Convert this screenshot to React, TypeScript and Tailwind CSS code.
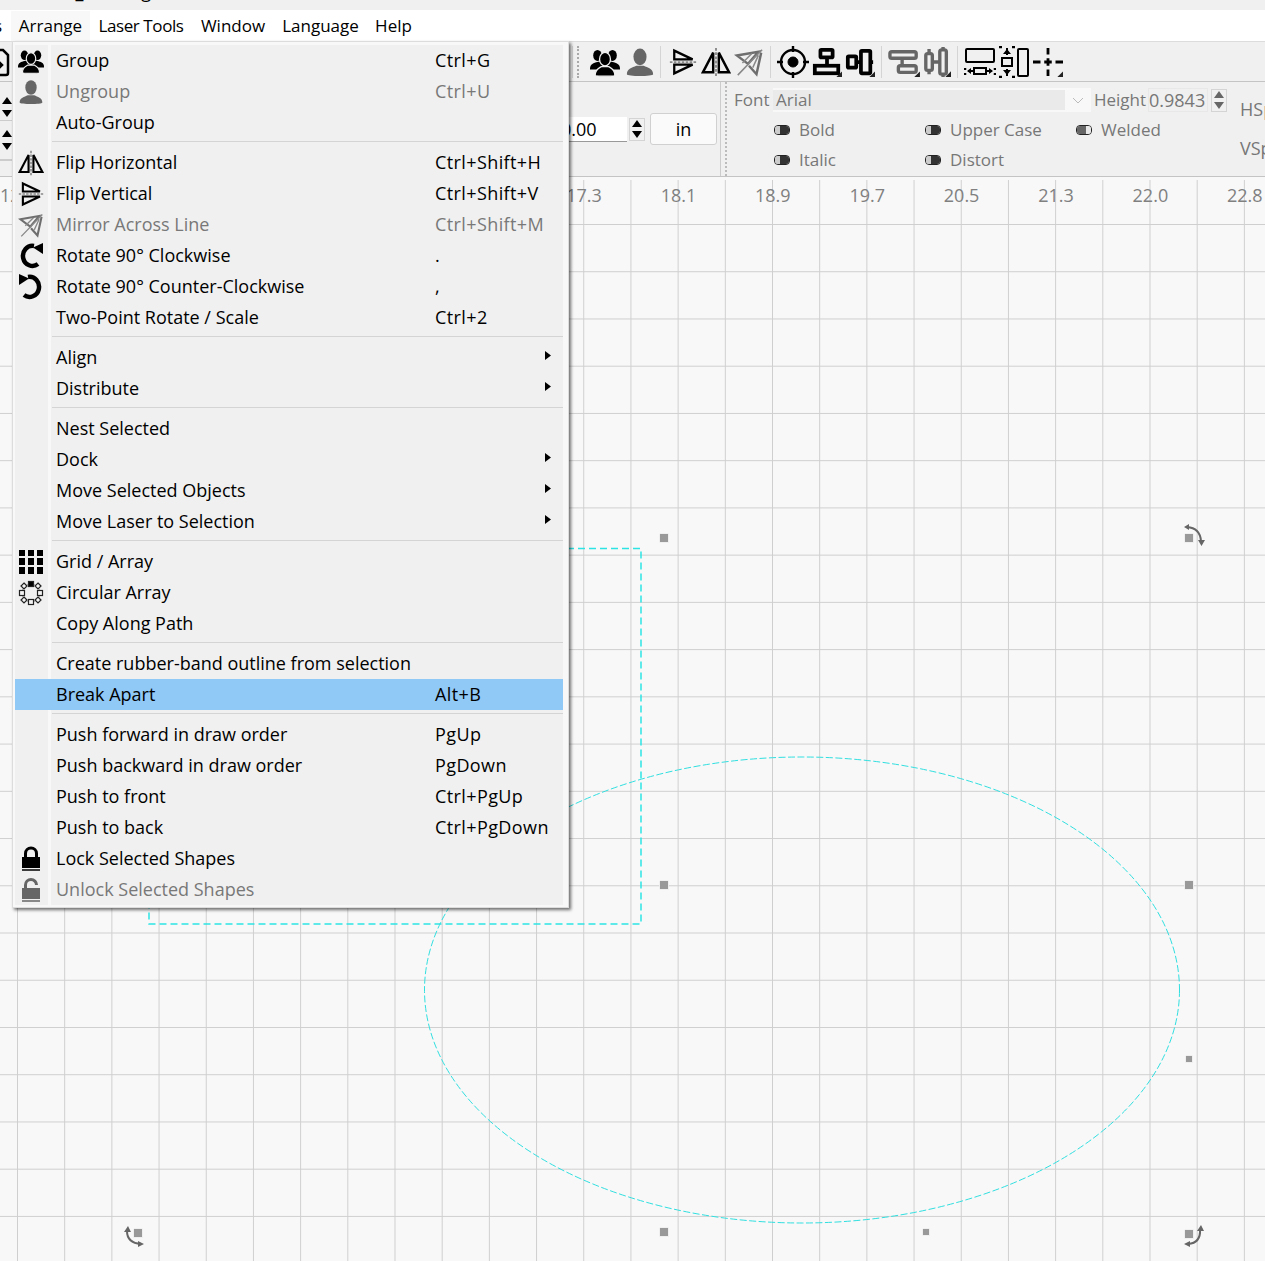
import type { ReactNode } from 'react'

const BLACK = '#000'
const GRAY = '#666'

function Users({ c = BLACK, size = 26 }: { c?: string; size?: number }) {
  return (
    <svg width={size} height={size} viewBox="0 0 32 32">
      <g fill={c}>
        <ellipse cx="8" cy="9" rx="4.6" ry="5.8" />
        <path d="M0 23c0-5 4-6 8-7s7 2 7 7v1H0z" />
        <ellipse cx="24" cy="9" rx="4.6" ry="5.8" />
        <path d="M32 23c0-5-4-6-8-7s-7 2-7 7v1h15z" />
      </g>
      <g fill={c} stroke="#f0f0f0" strokeWidth="1.4">
        <ellipse cx="16" cy="13" rx="5.8" ry="7.2" />
        <path d="M5.5 30c0-6 4-7.5 6.5-9h8c2.5 1.5 6.5 3 6.5 9 0 1.5-21 1.5-21 0z" />
      </g>
    </svg>
  )
}

function Person({ c = GRAY, size = 26 }: { c?: string; size?: number }) {
  return (
    <svg width={size} height={size} viewBox="0 0 32 32">
      <g fill={c}>
        <ellipse cx="16" cy="10.5" rx="7" ry="9" />
        <path d="M2 29c0-6 6-7 10-9h8c4 2 10 3 10 9 0 2.5-28 2.5-28 0z" />
      </g>
    </svg>
  )
}

function FlipH({ size = 26 }: { size?: number }) {
  return (
    <svg width={size} height={size} viewBox="0 0 32 32" fill="none">
      <path d="M13 6 2 27h11zM19 6l11 21H19z" stroke="#000" strokeWidth="2.6" />
      <path d="M16 1v30" stroke="#888" strokeWidth="2" strokeDasharray="3 1.5" />
    </svg>
  )
}

function FlipV({ size = 26 }: { size?: number }) {
  return (
    <svg width={size} height={size} viewBox="0 0 32 32" fill="none">
      <path d="M6 3l21 10H6zM6 29l21-10H6z" stroke="#000" strokeWidth="2.6" />
      <path d="M1 16h30" stroke="#888" strokeWidth="2" strokeDasharray="3 1.5" />
    </svg>
  )
}

function Mirror({ size = 26 }: { size?: number }) {
  return (
    <svg width={size} height={size} viewBox="0 0 32 32" fill="none">
      <path d="M3 9l23-4-11 13zM29 6l-5 23-8-9" stroke="#6e6e6e" strokeWidth="2.6" />
      <path d="M4 30 30 3M9 17l10-10M20 22l6-13" stroke="#888" strokeWidth="1.6" />
    </svg>
  )
}

function Rotate({ flip = false }: { flip?: boolean }) {
  return (
    <svg width="26" height="26" viewBox="0 0 26 26" className={flip ? '-scale-x-100' : ''}>
      <path d="M20 21A9.5 10 0 1 1 16 3" fill="none" stroke="#000" strokeWidth="4.5" />
      <path d="M15 4.5 25 0v11z" fill="#000" />
    </svg>
  )
}

function GridIcon() {
  const cells = [0, 1, 2, 3, 4, 5, 6, 7, 8]
  return (
    <div className="grid h-[24px] w-[24px] grid-cols-3 gap-[2.5px]">
      {cells.map((i) => (
        <div key={i} className="bg-black" />
      ))}
    </div>
  )
}

function Circular() {
  return (
    <svg width="26" height="26" viewBox="0 0 26 26" fill="#f4f4f4" stroke="#222" strokeWidth="1.2">
      <circle cx="13" cy="13" r="9" fill="none" stroke="#999" strokeWidth="1" />
      <rect x="10.5" y="1.5" width="5" height="5" fill="#000" />
      <rect x="10.5" y="19.5" width="5" height="5" />
      <rect x="1.5" y="10.5" width="5" height="5" />
      <rect x="19.5" y="10.5" width="5" height="5" />
      <path d="M6 3 9 6 6 9 3 6zM20 3l3 3-3 3-3-3zM6 17l3 3-3 3-3-3zM20 17l3 3-3 3-3-3z" />
    </svg>
  )
}

function Lock({ open = false }: { open?: boolean }) {
  const c = open ? '#666' : '#000'
  return (
    <svg width="24" height="26" viewBox="0 0 24 26">
      <path
        d={open ? 'M7 11V7a5.5 5.5 0 0 1 11 0' : 'M6.5 12V7.5a5.5 5.5 0 0 1 11 0V12'}
        fill="none"
        stroke={c}
        strokeWidth="3"
        transform={open ? 'translate(-0.5 1)' : undefined}
      />
      <path d="M3 11h18v11H3z" fill={c} />
      <path d="M3 24h18" stroke={c} strokeWidth="1.5" />
    </svg>
  )
}

function Target() {
  return (
    <svg width="32" height="32" viewBox="0 0 32 32" fill="none" stroke="#000">
      <circle cx="16" cy="16" r="12" strokeWidth="2.4" />
      <circle cx="16" cy="16" r="5" fill="#000" />
      <path d="M16 0v6M16 26v6M0 16h6M26 16h6" strokeWidth="2.4" />
    </svg>
  )
}

function Corner() {
  return <path d="M32 26v6h-6z" fill="#222" stroke="none" />
}

function AlignV() {
  return (
    <svg width="30" height="30" viewBox="0 0 32 32" fill="none" stroke="#000" strokeWidth="4">
      <rect x="9" y="3" width="13" height="8" rx="1" />
      <rect x="3" y="20" width="25" height="8" />
      <path d="M16 11v9" />
      <Corner />
    </svg>
  )
}

function AlignH() {
  return (
    <svg width="30" height="30" viewBox="0 0 32 32" fill="none" stroke="#000" strokeWidth="4">
      <rect x="3" y="10" width="9" height="12" rx="1" />
      <rect x="17" y="4" width="10" height="24" rx="1" />
      <path d="M12 16h5M27 16h3" />
      <Corner />
    </svg>
  )
}

function AlignVGray() {
  return (
    <svg width="32" height="30" viewBox="0 0 34 32" fill="none" stroke="#666" strokeWidth="3.6">
      <rect x="2" y="5" width="28" height="7" rx="2" />
      <rect x="11" y="20" width="19" height="7" rx="2" />
      <path d="M15 12v8" />
      <path d="M34 26v6h-6z" fill="#222" stroke="none" />
    </svg>
  )
}

function AlignHGray() {
  return (
    <svg width="28" height="30" viewBox="0 0 30 32" fill="none" stroke="#666" strokeWidth="3.6">
      <rect x="3" y="7" width="7" height="18" rx="2" />
      <rect x="18" y="3" width="7" height="26" rx="2" />
      <path d="M10 16h8M6.5 2v5M6.5 25v4M21.5 0v3M21.5 29v3" />
      <path d="M30 26v6h-6z" fill="#222" stroke="none" />
    </svg>
  )
}

function SpaceH() {
  return (
    <svg width="32" height="32" viewBox="0 0 32 32" fill="none" stroke="#000" strokeWidth="2">
      <rect x="2" y="3" width="28" height="13" rx="1" />
      <path d="M1 22v2M1 27v2M31 22v2M31 27v2" strokeWidth="2.5" />
      <rect x="10" y="22" width="12" height="6" />
      <path d="M9 25H4M23 25h5" />
      <path d="M3 25l4-3v6zM29 25l-4-3v6z" fill="#000" stroke="none" />
    </svg>
  )
}

function SpaceV() {
  return (
    <svg width="18" height="32" viewBox="0 0 18 32" fill="none" stroke="#000" strokeWidth="2">
      <path d="M1 1h3M14 1h3M1 31h3M14 31h3" strokeWidth="2.5" />
      <rect x="4" y="12" width="10" height="8" />
      <path d="M9 2v7M9 23v7" />
      <path d="M9 3l4 5H5zM9 29l4-5H5z" fill="#000" stroke="none" />
    </svg>
  )
}

function TallBox() {
  return (
    <svg width="14" height="32" viewBox="0 0 14 32" fill="none" stroke="#000" strokeWidth="2">
      <rect x="2" y="3" width="10" height="27" rx="1" />
    </svg>
  )
}

function Cross() {
  return (
    <svg width="30" height="32" viewBox="0 0 32 32" fill="none" stroke="#000" strokeWidth="3">
      <path d="M0 16h8M12 16h8M24 16h8M16 1v7M16 12v8M16 24v7" />
      <path d="M32 26v6h-6z" fill="#222" stroke="none" />
    </svg>
  )
}

function Spin({ c = '#000', boxed = false }: { c?: string; boxed?: boolean }) {
  return (
    <div className={boxed ? 'flex h-[23px] w-[16px] shrink-0 flex-col items-center justify-around border border-[#d4d4d4]' : 'flex h-[20px] w-[10px] shrink-0 flex-col items-center justify-between'}>
      <svg width="10" height="7" viewBox="0 0 10 7"><path d="M5 0l5 7H0z" fill={c} /></svg>
      <svg width="10" height="7" viewBox="0 0 10 7"><path d="M5 7 0 0h10z" fill={c} /></svg>
    </div>
  )
}

function Toggle({ on = false }: { on?: boolean }) {
  if (on) {
    return (
      <div className="flex h-[10px] w-[16px] shrink-0 overflow-hidden rounded-[4px] border border-[#222]">
        <div className="w-[9px] bg-[#666]" />
        <div className="flex-1 bg-[#e8e8e8]" />
      </div>
    )
  }
  return (
    <div className="flex h-[10px] w-[16px] shrink-0 overflow-hidden rounded-[4px] border border-[#222]">
      <div className="flex-1 bg-[#ccc]" />
      <div className="w-[9px] bg-[#333]" />
    </div>
  )
}

function ToggleLabel({ label, on = false }: { label: string; on?: boolean }) {
  return (
    <div className="flex h-[30px] w-[151px] shrink-0 items-center gap-[9px] text-[17px] text-[#777]">
      <Toggle on={on} />
      <span>{label}</span>
    </div>
  )
}

type Item = {
  label: string
  shortcut?: string
  icon?: ReactNode
  disabled?: boolean
  sub?: boolean
  active?: boolean
}

const groups: Item[][] = [
  [
    { label: 'Group', shortcut: 'Ctrl+G', icon: <Users /> },
    { label: 'Ungroup', shortcut: 'Ctrl+U', icon: <Person />, disabled: true },
    { label: 'Auto-Group' },
  ],
  [
    { label: 'Flip Horizontal', shortcut: 'Ctrl+Shift+H', icon: <FlipH /> },
    { label: 'Flip Vertical', shortcut: 'Ctrl+Shift+V', icon: <FlipV /> },
    { label: 'Mirror Across Line', shortcut: 'Ctrl+Shift+M', icon: <Mirror />, disabled: true },
    { label: 'Rotate 90° Clockwise', shortcut: '.', icon: <Rotate /> },
    { label: 'Rotate 90° Counter-Clockwise', shortcut: ',', icon: <Rotate flip /> },
    { label: 'Two-Point Rotate / Scale', shortcut: 'Ctrl+2' },
  ],
  [
    { label: 'Align', sub: true },
    { label: 'Distribute', sub: true },
  ],
  [
    { label: 'Nest Selected' },
    { label: 'Dock', sub: true },
    { label: 'Move Selected Objects', sub: true },
    { label: 'Move Laser to Selection', sub: true },
  ],
  [
    { label: 'Grid / Array', icon: <GridIcon /> },
    { label: 'Circular Array', icon: <Circular /> },
    { label: 'Copy Along Path' },
  ],
  [
    { label: 'Create rubber-band outline from selection' },
    { label: 'Break Apart', shortcut: 'Alt+B', active: true },
  ],
  [
    { label: 'Push forward in draw order', shortcut: 'PgUp' },
    { label: 'Push backward in draw order', shortcut: 'PgDown' },
    { label: 'Push to front', shortcut: 'Ctrl+PgUp' },
    { label: 'Push to back', shortcut: 'Ctrl+PgDown' },
    { label: 'Lock Selected Shapes', icon: <Lock /> },
    { label: 'Unlock Selected Shapes', icon: <Lock open />, disabled: true },
  ],
]

function MenuRow({ item }: { item: Item }) {
  return (
    <div className={item.active ? 'flex h-[31px] items-center bg-[#90c8f6]' : 'flex h-[31px] items-center'}>
      <div className="flex w-[32px] items-center justify-center">{item.icon}</div>
      <div className={item.active ? 'h-full w-[5px]' : 'h-full w-[5px] border-x-[1px] border-[#f0f0f0] bg-[#f8f8f8]'} />
      <div className={item.disabled ? 'w-[383px] whitespace-nowrap pl-[4px] text-[#787878]' : 'w-[383px] whitespace-nowrap pl-[4px]'}>{item.label}</div>
      <div className={item.disabled ? 'flex-1 whitespace-nowrap tracking-[0.4px] text-[#787878]' : 'flex-1 whitespace-nowrap tracking-[0.4px]'}>{item.shortcut}</div>
      {item.sub && (
        <svg className="mr-[12px] -translate-y-[2px]" width="6" height="9" viewBox="0 0 6 9">
          <path d="M0 0l6 4.5L0 9z" fill="#000" />
        </svg>
      )}
    </div>
  )
}

function Menu() {
  return (
    <div className="absolute left-[12px] top-[41px] w-[557px] border border-[#dcdcdc] bg-[#f8f8f8] pb-[2px] pl-[2px] pr-[5px] pt-[3px] text-black shadow-[2px_2px_3px_rgba(0,0,0,0.55)]">
      <div className="bg-[#f0f0f0]">
        {groups.map((group, i) => (
          <div key={i}>
            {i > 0 && (
              <div className="flex h-[9px]">
                <div className="w-[32px]" />
                <div className="h-full w-[5px] border-x-[1px] border-[#f0f0f0] bg-[#f8f8f8]" />
                <div className="mt-[3px] h-px flex-1 bg-[#d4d4d4]" />
              </div>
            )}
            {group.map((item) => (
              <MenuRow key={item.label} item={item} />
            ))}
          </div>
        ))}
      </div>
    </div>
  )
}

// the ones between 12.5 and 17.3 sit behind the open menu
const rulerLabels = ['12.5', '', '', '', '', '', '17.3', '18.1', '18.9', '19.7', '20.5', '21.3', '22.0', '22.8']

function Handle({ x, y, s = 9 }: { x: number; y: number; s?: number }) {
  return <rect x={x - s / 2} y={y - s / 2} width={s} height={s} fill="#999" stroke="#f8f8f8" strokeWidth="0.8" />
}

function Canvas() {
  return (
    <div className="relative mt-[3px] h-[1081px] bg-[linear-gradient(to_right,#cfcfcf_1px,transparent_1px),linear-gradient(to_bottom,#cfcfcf_1px,transparent_1px)] bg-[size:47.2px_47.24px] bg-[position:17px_44px]">
      <div className="-ml-[29.5px] flex h-[30px] items-center text-[#808080]">
        {rulerLabels.map((label, i) => (
          <div key={i} className="w-[94.4px] shrink-0 text-center">
            {label}
          </div>
        ))}
      </div>
      <svg className="absolute inset-0 h-full w-full" viewBox="0 180 1265 1081" fill="none">
        <rect x="149" y="548.5" width="492" height="375.5" stroke="#2de4e4" strokeWidth="1.5" strokeDasharray="7 4" />
        <ellipse cx="802" cy="990" rx="377.5" ry="233" stroke="#30dfe0" strokeWidth="1" strokeDasharray="7 2.5" />
        <Handle x={664} y={538} />
        <Handle x={1189} y={538} />
        <Handle x={664} y={885} />
        <Handle x={1189} y={885} />
        <Handle x={1189} y={1059} s={7} />
        <Handle x={664} y={1232} />
        <Handle x={926} y={1232} s={7} />
        <Handle x={138} y={1233} />
        <Handle x={1189} y={1234} />
        <g stroke="#666" strokeWidth="2">
          <path d="M1187 527Q1200 528 1201 541" />
          <path d="M127 1231Q127 1243 141 1244" />
          <path d="M1200 1229Q1201 1243 1188 1244" />
        </g>
        <g fill="#666">
          <path d="M1189 524v6l-5-3zM1198 540h7l-3.5 6zM124 1232h7l-3-6zM138 1241l6 3-6 3zM1197 1231h7l-3-6zM1190 1241l-6 3 6 3z" />
        </g>
      </svg>
    </div>
  )
}

function Divider() {
  return <div className="mx-[6px] h-[32px] w-px bg-[#d4d4d4]" />
}

export default function App() {
  return (
    <div className="relative h-[1261px] w-[1265px] overflow-hidden bg-[#f8f8f8] font-['Open_Sans',sans-serif] text-[18px] text-black">
      <div className="h-[10px] overflow-hidden bg-[#f0f0f0]">
        <div className="-mt-[22px] whitespace-nowrap pl-[4px]">Lasercut_drawing</div>
      </div>

      <div className="flex h-[31px] items-center bg-white pt-px text-[17px]">
        <div className="w-[3px] overflow-hidden">
          <span className="-ml-[6px] block">s</span>
        </div>
        <div className="ml-[8px] flex h-full w-[79px] items-center justify-center bg-[#f8f8f8]">Arrange</div>
        <div className="w-[102px] text-center tracking-[-0.4px]">Laser Tools</div>
        <div className="w-[82px] text-center">Window</div>
        <div className="w-[93px] text-center">Language</div>
        <div className="w-[53px] text-center">Help</div>
      </div>

      <div className="flex h-[41px] items-center border-y border-t-[#dcdcdc] border-b-[#c4c4c4] bg-[#f0f0f0]">
        <svg className="-ml-[16px] shrink-0" width="26" height="30" viewBox="0 0 26 30" fill="none" stroke="#000" strokeWidth="2.5">
          <path d="M4 3h15l5 5v18a2 2 0 0 1-2 2H6M2 18h16m-5-5 5 5-5 5" />
        </svg>
        <div className="ml-[562px] h-[32px] w-px bg-[#d4d4d4]" />
        <div className="ml-[4px] h-[32px] border-l-2 border-dotted border-[#aaa]" />
        <div className="ml-[11px] flex items-center">
          <Users size={30} />
          <div className="ml-[5px]"><Person size={30} /></div>
          <div className="ml-[5px] h-[32px] w-px bg-[#d4d4d4]" />
          <div className="ml-[8px]"><FlipV size={28} /></div>
          <div className="ml-[4px]"><FlipH size={30} /></div>
          <div className="ml-[3px]"><Mirror size={30} /></div>
          <Divider />
          <Target />
          <div className="ml-[3px]"><AlignV /></div>
          <div className="ml-[3px]"><AlignH /></div>
          <Divider />
          <AlignVGray />
          <div className="ml-[3px]"><AlignHGray /></div>
          <Divider />
          <SpaceH />
          <div className="ml-[2px]"><SpaceV /></div>
          <TallBox />
          <div className="ml-[3px]"><Cross /></div>
        </div>
      </div>

      <div className="flex h-[95px] items-center border-b border-[#c4c4c4] bg-[#f0f0f0]">
        <div className="flex h-full w-[12px] shrink-0 flex-col">
          <div className="flex h-[39px] items-end justify-end border-b border-[#ccc] pb-[3px]"><Spin /></div>
          <div className="flex h-[40px] items-center justify-end border-b-2 border-[#ccc]"><Spin /></div>
        </div>
        <div className="ml-[528px] h-[25px] w-[87px] shrink-0 border-b border-[#999] bg-white pl-[21px] leading-[24px]">0.00</div>
        <div className="ml-[2px]"><Spin boxed /></div>
        <div className="ml-[5px] flex h-[32px] w-[67px] shrink-0 items-center justify-center rounded-[3px] border border-[#d0d0d0] bg-[#fafafa]">in</div>
        <div className="ml-[3px] h-full w-px shrink-0 bg-[#ccc]" />
        <div className="ml-[4px] h-full shrink-0 border-l-2 border-dotted border-[#bbb]" />

        <div className="ml-[7px] flex h-full w-[506px] shrink-0 flex-col pt-[7px] text-[17px] text-[#777]">
          <div className="flex h-[22px] items-center">
            <span className="w-[39px] shrink-0">Font</span>
            <div className="flex h-[24px] w-[318px] shrink-0 items-center bg-[#f8f8f8] pr-[5px]">
              <div className="flex h-[20px] w-[292px] items-center bg-[#eaeaea] pl-[3px]">Arial</div>
              <svg className="ml-[7px]" width="12" height="7" viewBox="0 0 12 7" fill="none" stroke="#bbb" strokeWidth="1">
                <path d="M1 1l5 5 5-5" />
              </svg>
            </div>
            <span className="ml-[3px] w-[54px] shrink-0">Height</span>
            <div className="flex h-[24px] w-[60px] shrink-0 items-center border border-[#e8e8e8] text-[18px]">0.9843</div>
            <div className="ml-[3px]"><Spin c="#666" boxed /></div>
          </div>
          <div className="mt-[4px] flex pl-[40px]">
            <ToggleLabel label="Bold" />
            <ToggleLabel label="Upper Case" />
            <ToggleLabel label="Welded" on />
          </div>
          <div className="flex pl-[40px]">
            <ToggleLabel label="Italic" />
            <ToggleLabel label="Distort" />
          </div>
        </div>
        <div className="flex h-full flex-col justify-between whitespace-nowrap py-[14px] text-[#777]">
          <span>HSpacing</span>
          <span>VSpacing</span>
        </div>
      </div>

      <Canvas />
      <Menu />
    </div>
  )
}
